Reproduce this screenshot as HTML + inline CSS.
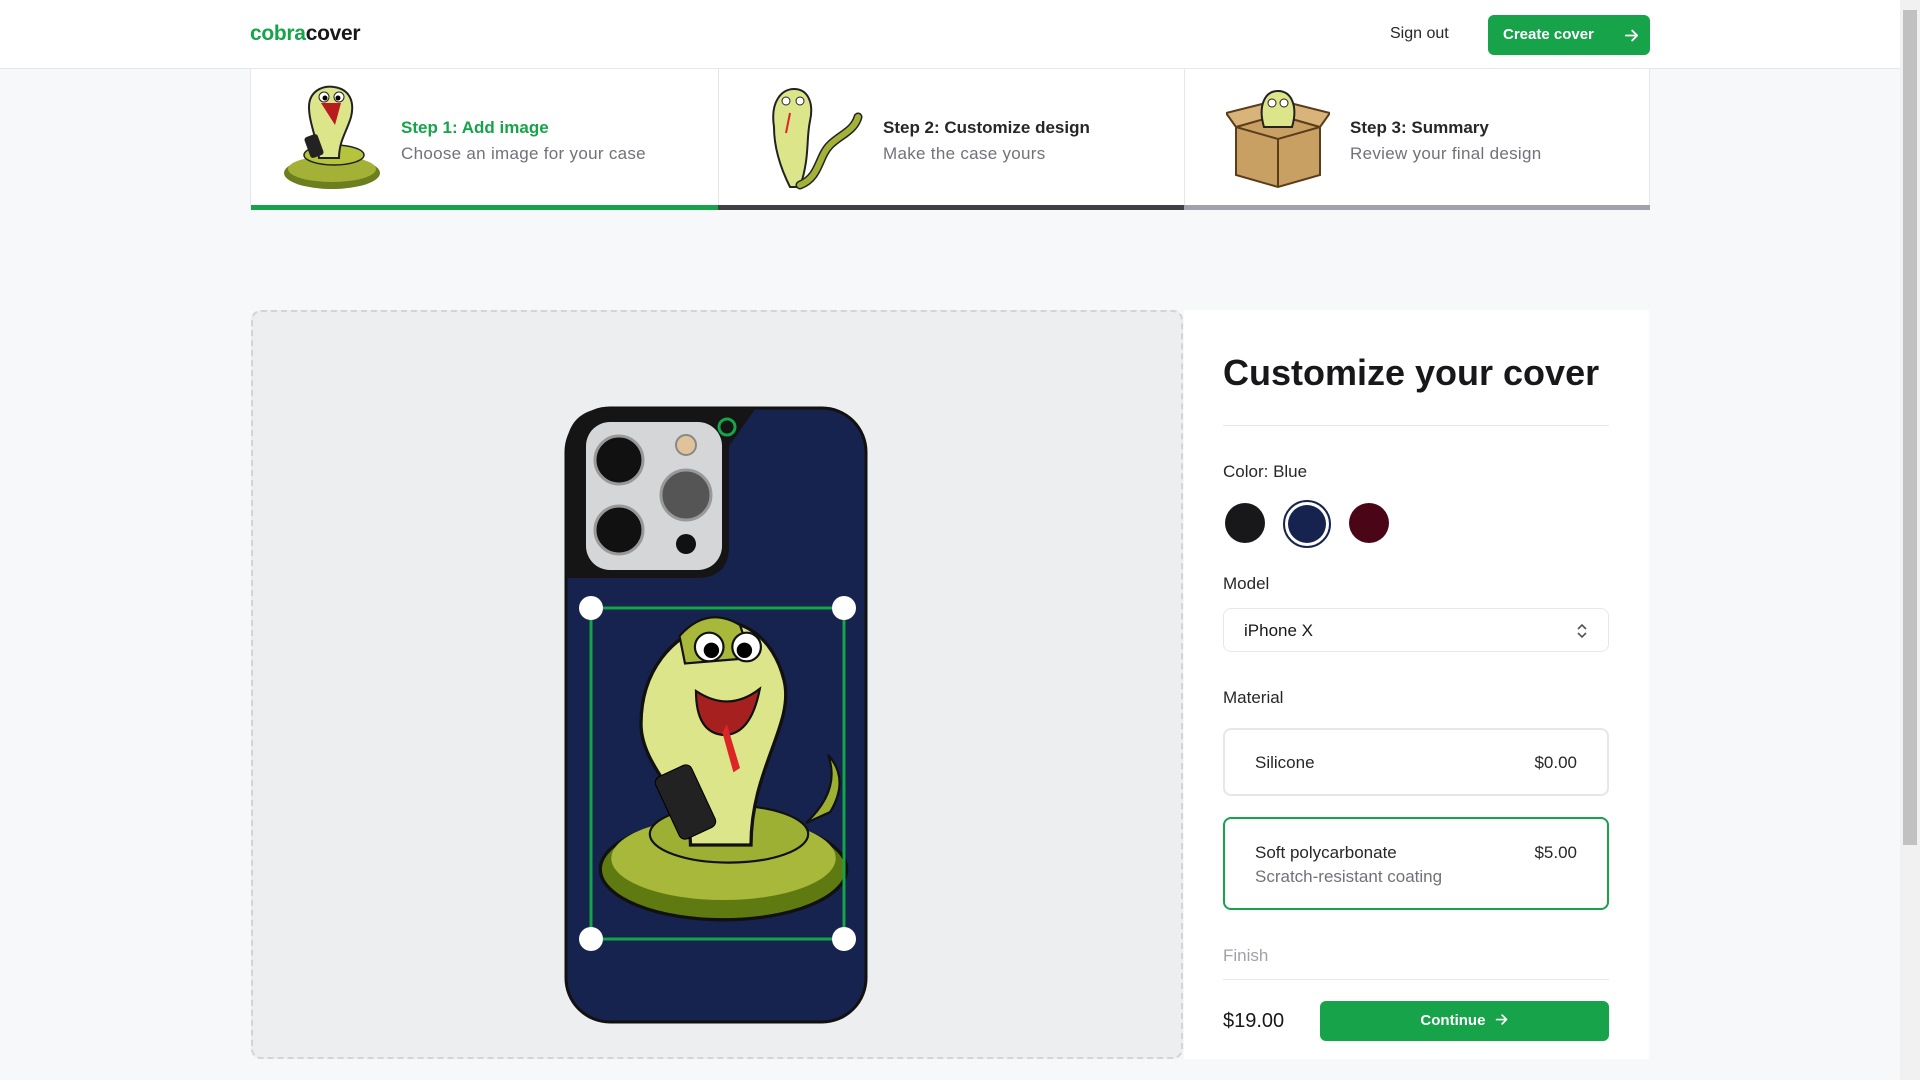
<!DOCTYPE html>
<html><head><meta charset="utf-8"><style>
*{box-sizing:border-box;margin:0;padding:0}
body{width:1920px;height:1080px;overflow:hidden;background:#f7f8f9;font-family:"Liberation Sans",sans-serif;color:#18181b;position:relative}
.nav{position:absolute;left:0;top:0;width:1900px;height:69px;background:#fff;border-bottom:1px solid #e5e7eb}
.logo{position:absolute;left:250px;top:22px;font-size:21px;font-weight:bold;letter-spacing:-0.3px}
.logo span{color:#16a34a}
.signout{position:absolute;left:1390px;top:25px;font-size:16px;color:#27272a}
.cbtn{position:absolute;left:1488px;top:15px;width:162px;height:40px;background:#16a34a;border-radius:6px;color:#fff;font-weight:bold;font-size:15px;line-height:40px;padding-left:15px}
.steps{position:absolute;left:250px;top:69px;width:1400px;height:141px;background:#fff;border-left:1px solid #e5e7eb;border-right:1px solid #e5e7eb}
.step{position:absolute;top:0;height:141px}
.bar{position:absolute;left:0;right:0;bottom:0;height:5px}
.st{position:absolute;top:49px;font-size:17px;font-weight:bold;color:#27272a}
.sd{position:absolute;top:75px;font-size:17px;color:#71717a;white-space:nowrap;letter-spacing:0.3px}
.sep{position:absolute;top:0;width:1px;height:136px;background:#e5e7eb}
.dash{position:absolute;left:251px;top:310px;width:932px;height:749px;border:2px dashed #d4d4d8;border-radius:10px;background:#eceef0}
.panel{position:absolute;left:1184px;top:310px;width:465px;height:749px;background:#fff}
.abs{position:absolute}
.lbl{font-size:17px;color:#27272a}
.box{position:absolute;left:39px;width:386px;border:2px solid #e5e7eb;border-radius:8px}
.scroll{position:absolute;left:1900px;top:0;width:20px;height:1080px;background:#f1f1f1}
.thumb{position:absolute;left:1903px;top:10px;width:14px;height:835px;background:#c1c1c1}
</style></head><body>
<div class="nav">
<div class="logo"><span>cobra</span>cover</div>
<div class="signout">Sign out</div>
<div class="cbtn">Create cover <svg style="position:absolute;left:135px;top:12px" width="17" height="17" viewBox="0 0 24 24" fill="none" stroke="#fff" stroke-width="2.6" stroke-linecap="round" stroke-linejoin="round"><path d="M4 12h16M13 5l7 7-7 7"/></svg></div>
</div>
<div class="steps">
 <div class="step" style="left:0;width:467px">
  <svg class="abs" style="left:28px;top:14px" width="106" height="108" viewBox="0 0 106 108"><ellipse cx="53" cy="90" rx="48" ry="16" fill="#6b7f1e"/><ellipse cx="53" cy="86" rx="44" ry="13" fill="#a3b236"/><ellipse cx="55" cy="72" rx="30" ry="10" fill="#b5c43c" stroke="#222" stroke-width="1.5"/><path d="M40 75 C38 55 30 40 30 24 C30 8 44 2 55 4 C70 6 76 18 72 34 C68 48 60 58 60 75Z" fill="#dde58a" stroke="#222" stroke-width="2"/><path d="M42 20 L62 20 L56 42 Z" fill="#b91c1c"/><circle cx="45" cy="14" r="5" fill="#fff" stroke="#222"/><circle cx="60" cy="14" r="5" fill="#fff" stroke="#222"/><circle cx="46" cy="15" r="2.5"/><circle cx="59" cy="15" r="2.5"/><rect x="28" y="52" width="14" height="22" rx="3" fill="#222" transform="rotate(-20 35 63)"/></svg>
  <div class="st" style="left:150px;color:#16a34a">Step 1: Add image</div>
  <div class="sd" style="left:150px">Choose an image for your case</div>
  <div class="bar" style="background:#16a34a"></div>
 </div>
 <div class="sep" style="left:467px"></div>
 <div class="step" style="left:467px;width:466px">
  <svg class="abs" style="left:42px;top:18px" width="104" height="104" viewBox="0 0 104 104"><path d="M30 100 C20 80 14 60 14 40 C10 14 22 2 34 2 C48 2 54 16 50 34 C46 52 50 70 40 100 Z" fill="#dde58a" stroke="#222" stroke-width="2"/><path d="M40 98 C60 90 58 70 70 58 C80 48 94 44 98 30" fill="none" stroke="#222" stroke-width="9" stroke-linecap="round"/><path d="M40 98 C60 90 58 70 70 58 C80 48 94 44 98 30" fill="none" stroke="#a3b236" stroke-width="6" stroke-linecap="round"/><circle cx="26" cy="14" r="4" fill="#fff" stroke="#222"/><circle cx="40" cy="14" r="4" fill="#fff" stroke="#222"/><path d="M30 26 L26 46" stroke="#dc2626" stroke-width="2"/></svg>
  <div class="st" style="left:165px">Step 2: Customize design</div>
  <div class="sd" style="left:165px">Make the case yours</div>
  <div class="bar" style="background:#3f3f46"></div>
 </div>
 <div class="sep" style="left:933px"></div>
 <div class="step" style="left:933px;width:466px">
  <svg class="abs" style="left:42px;top:18px" width="104" height="104" viewBox="0 0 104 104"><path d="M10 40 L52 28 L94 40 L94 88 L52 100 L10 88 Z" fill="#c9a063" stroke="#5a3d1a" stroke-width="2"/><path d="M10 40 L52 52 L94 40 M52 52 L52 100" stroke="#5a3d1a" stroke-width="2" fill="none"/><path d="M10 40 L0 26 L40 16 L52 28 Z M94 40 L104 26 L64 16 L52 28Z" fill="#d9b47a" stroke="#5a3d1a" stroke-width="2"/><path d="M38 40 C32 20 38 4 52 4 C66 4 72 20 66 40 Z" fill="#dde58a" stroke="#222" stroke-width="2"/><circle cx="46" cy="16" r="4" fill="#fff" stroke="#222"/><circle cx="58" cy="16" r="4" fill="#fff" stroke="#222"/></svg>
  <div class="st" style="left:166px">Step 3: Summary</div>
  <div class="sd" style="left:166px">Review your final design</div>
  <div class="bar" style="background:#a1a1aa"></div>
 </div>
</div>

<div class="dash"></div>
<svg class="abs" style="left:564px;top:406px" width="304" height="618" viewBox="0 0 304 618">
 <rect x="2" y="2" width="300" height="614" rx="44" fill="#17234f" stroke="#111" stroke-width="3"/>
 <path d="M46 2 L192 2 L165 40 L165 140 Q165 172 133 172 L2 172 L2 46 Q2 2 46 2Z" fill="#151515"/>
 <rect x="22" y="16" width="136" height="148" rx="24" fill="#d4d6d8"/>
 <circle cx="55" cy="54" r="24" fill="#111" stroke="#999" stroke-width="3"/>
 <circle cx="55" cy="124" r="24" fill="#111" stroke="#999" stroke-width="3"/>
 <circle cx="122" cy="89" r="25" fill="#555" stroke="#999" stroke-width="3"/>
 <circle cx="122" cy="39" r="10" fill="#e0c39a" stroke="#888" stroke-width="2"/>
 <circle cx="122" cy="138" r="10" fill="#111"/>
 <circle cx="163" cy="21" r="8" fill="none" stroke="#16a34a" stroke-width="3"/>
 <g transform="translate(22,208) scale(1.1)">
  <ellipse cx="125" cy="232" rx="112" ry="46" fill="#5f7a10" stroke="#111" stroke-width="3"/>
  <ellipse cx="125" cy="222" rx="102" ry="38" fill="#a7b83a"/>
  <ellipse cx="130" cy="200" rx="72" ry="26" fill="#9db034" stroke="#111" stroke-width="2"/>
  <path d="M222 180 Q240 150 220 128 Q232 160 200 190Z" fill="#9db034" stroke="#111" stroke-width="2"/>
  <path d="M95 210 C95 170 50 140 50 100 C50 50 80 20 110 10 C140 0 170 20 180 60 C190 100 150 140 150 210Z" fill="#dde58a" stroke="#111" stroke-width="3"/>
  <path d="M85 20 Q110 -8 140 10 L150 40 L90 45Z" fill="#a7b83a" stroke="#111" stroke-width="2"/>
  <path d="M100 70 Q130 90 158 68 Q150 110 125 110 Q100 108 100 70Z" fill="#a62020" stroke="#111" stroke-width="2"/>
  <path d="M128 100 L140 140 L134 144 L124 108Z" fill="#dc2626"/>
  <circle cx="112" cy="30" r="13" fill="#fff" stroke="#111" stroke-width="2"/>
  <circle cx="146" cy="30" r="13" fill="#fff" stroke="#111" stroke-width="2"/>
  <circle cx="114" cy="33" r="7"/><circle cx="144" cy="33" r="7"/>
  <rect x="72" y="140" width="36" height="62" rx="6" fill="#222" stroke="#000" transform="rotate(-25 90 170)"/>
 </g>
 <rect x="27" y="202" width="253" height="331" fill="none" stroke="#16a34a" stroke-width="3"/>
 <circle cx="27" cy="202" r="12" fill="#fff"/><circle cx="280" cy="202" r="12" fill="#fff"/>
 <circle cx="27" cy="533" r="12" fill="#fff"/><circle cx="280" cy="533" r="12" fill="#fff"/>
</svg>

<div class="panel">
 <div class="abs" style="left:39px;top:42px;font-size:36px;font-weight:bold">Customize your cover</div>
 <div class="abs" style="left:39px;top:115px;width:386px;height:1px;background:#e5e7eb"></div>
 <div class="abs lbl" style="left:39px;top:152px">Color: Blue</div>
 <div class="abs" style="left:41px;top:193px;width:40px;height:40px;border-radius:50%;background:#18181b"></div>
 <div class="abs" style="left:99px;top:190px;width:48px;height:48px;border-radius:50%;border:2px solid #17234f;padding:3px"><div style="width:38px;height:38px;border-radius:50%;background:#17234f"></div></div>
 <div class="abs" style="left:165px;top:193px;width:40px;height:40px;border-radius:50%;background:#4a0516"></div>
 <div class="abs lbl" style="left:39px;top:264px">Model</div>
 <div class="box" style="top:298px;height:44px;border-width:1px;font-size:17px;padding:12px 0 0 20px">iPhone X
  <svg class="abs" style="right:20px;top:13px" width="12" height="18" viewBox="0 0 12 18" fill="none" stroke="#52525b" stroke-width="1.6"><path d="M2 7l4-4 4 4M2 11l4 4 4-4"/></svg></div>
 <div class="abs lbl" style="left:39px;top:378px">Material</div>
 <div class="box" style="top:418px;height:68px"><div class="abs lbl" style="left:30px;top:23px">Silicone</div><div class="abs lbl" style="right:30px;top:23px">$0.00</div></div>
 <div class="box" style="top:507px;height:93px;border-color:#16a34a"><div class="abs lbl" style="left:30px;top:24px">Soft polycarbonate</div><div class="abs" style="left:30px;top:48px;font-size:17px;color:#71717a">Scratch-resistant coating</div><div class="abs lbl" style="right:30px;top:24px">$5.00</div></div>
 <div class="abs" style="left:39px;top:636px;font-size:17px;color:#a1a1aa">Finish</div>
 <div class="abs" style="left:39px;top:669px;width:386px;height:1px;background:#e5e7eb"></div>
 <div class="abs" style="left:39px;top:700px;font-size:20px">$19.00</div>
 <div class="abs" style="left:136px;top:691px;width:289px;height:40px;background:#16a34a;border-radius:6px;color:#fff;font-weight:bold;font-size:15px;line-height:40px;text-align:center">Continue <svg style="vertical-align:-2px;margin-left:4px" width="15" height="15" viewBox="0 0 24 24" fill="none" stroke="#fff" stroke-width="2.6" stroke-linecap="round" stroke-linejoin="round"><path d="M4 12h16M13 5l7 7-7 7"/></svg></div>
</div>
<div class="scroll"></div><div class="thumb"></div>
</body></html>
